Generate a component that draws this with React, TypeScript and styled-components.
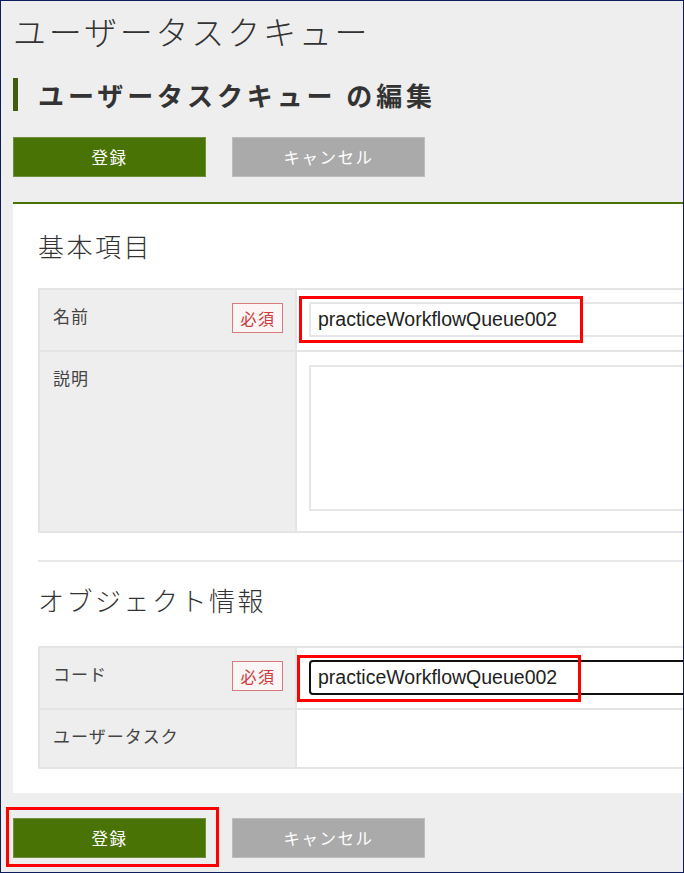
import React from "react";
import styled, { createGlobalStyle } from "styled-components";

const GlobalStyle = createGlobalStyle`
  html, body { margin: 0; padding: 0; }
  body {
    font-family: "Noto Sans CJK JP", "Noto Sans", sans-serif;
    background: #eeeeee;
    color: #333;
  }
  * { box-sizing: border-box; }
`;

const Frame = styled.div`
  position: relative;
  width: 684px;
  height: 873px;
  border: 1px solid #0c1c5c;
  background: #eeeeee;
  overflow: hidden;
  padding-left: 12px;
`;

const Title = styled.h1`
  margin: 0;
  padding-top: 12px;
  font-size: 33px;
  line-height: 36px;
  font-weight: 300;
  letter-spacing: 2.8px;
  color: #333;
  white-space: nowrap;
`;

const SubHeading = styled.h2`
  display: flex;
  align-items: center;
  margin: 29px 0 0;
  height: 33px;
  border-left: 5px solid #3e5e0c;
  padding-left: 20px;
  font-size: 26px;
  font-weight: 700;
  letter-spacing: 3.9px;
  color: #333;
  white-space: nowrap;
`;

const ButtonRow = styled.div<{ $top: number }>`
  display: flex;
  gap: 26px;
  margin-top: ${(p) => p.$top}px;
`;

const Button = styled.button<{ $variant: "primary" | "secondary" }>`
  width: 193px;
  height: 40px;
  border: 1px solid ${(p) => (p.$variant === "primary" ? "#6f8f3f" : "#bdbdbd")};
  background: ${(p) => (p.$variant === "primary" ? "#4a7306" : "#aaaaaa")};
  color: #ffffff;
  font-family: "Noto Sans CJK JP", sans-serif;
  font-size: 16.5px;
  letter-spacing: 1.5px;
  padding: 0;
  cursor: pointer;
`;

const Anchor = styled.div`
  position: relative;
`;

const Highlight = styled.div<{ $l: number; $t: number; $w: number; $h: number }>`
  position: absolute;
  left: ${(p) => p.$l}px;
  top: ${(p) => p.$t}px;
  width: ${(p) => p.$w}px;
  height: ${(p) => p.$h}px;
  border: 3px solid #ff0000;
  pointer-events: none;
`;

const Panel = styled.section`
  margin-top: 25px;
  border-top: 2px solid #4a7306;
  background: #ffffff;
  padding: 0 0 24px 25px;
`;

const SectionHeading = styled.h3`
  margin: 0;
  font-size: 26px;
  line-height: 32px;
  font-weight: 300;
  letter-spacing: 2.5px;
  color: #333;
  white-space: nowrap;
`;

const Section = styled.div<{ $headTop: number; $tableTop: number }>`
  ${SectionHeading} {
    margin-top: ${(p) => p.$headTop}px;
    margin-bottom: ${(p) => p.$tableTop}px;
  }
`;

const Divider = styled.hr`
  margin: 27px 0 0;
  border: none;
  border-top: 2px solid #e8e8e8;
  width: calc(100% + 20px);
`;

const Table = styled.div`
  width: calc(100% + 20px);
  border: 2px solid #e4e4e4;
  border-right: none;
`;

const Row = styled.div<{ $h: number }>`
  display: grid;
  grid-template-columns: 257px 1fr;
  height: ${(p) => p.$h}px;
  & + & {
    border-top: 2px solid #e4e4e4;
  }
`;

const LabelCell = styled.div`
  display: flex;
  justify-content: space-between;
  align-items: flex-start;
  background: #eeeeee;
  border-right: 2px solid #e4e4e4;
  padding: 15px 12px 0 13px;
`;

const LabelText = styled.span`
  font-size: 17px;
  line-height: 22px;
  letter-spacing: 1px;
  color: #444;
  white-space: nowrap;
`;

const Required = styled.span`
  display: inline-flex;
  align-items: center;
  justify-content: center;
  width: 51px;
  height: 30px;
  margin-top: -2px;
  border: 1px solid #d57b7b;
  background: #fbf5f5;
  color: #cc3b3b;
  font-size: 16px;
  letter-spacing: 1.5px;
  padding-left: 1px;
`;

const ValueCell = styled.div`
  position: relative;
  padding: 12px 0 0 12px;
  overflow: visible;
`;

const TextInput = styled.input<{ $focused?: boolean }>`
  display: block;
  width: 100%;
  height: 35px;
  border: ${(p) => (p.$focused ? "2px solid #111" : "2px solid #e6e6e6")};
  border-radius: ${(p) => (p.$focused ? "4px" : "0")};
  padding: 0 0 0 7px;
  font-family: "Liberation Sans", Arial, sans-serif;
  font-size: 19.5px;
  color: #222;
  background: #fff;
  outline: none;
`;

const TextArea = styled.textarea`
  display: block;
  width: 100%;
  height: 146px;
  margin-top: 1px;
  border: 2px solid #e6e6e6;
  resize: none;
  background: #fff;
  outline: none;
`;

export default function App() {
  return (
    <>
      <GlobalStyle />
      <Frame>
        <Title>ユーザータスクキュー</Title>
        <SubHeading>ユーザータスクキュー の編集</SubHeading>
        <ButtonRow $top={26}>
          <Button $variant="primary">登録</Button>
          <Button $variant="secondary">キャンセル</Button>
        </ButtonRow>

        <Panel>
          <Section $headTop={26} $tableTop={26}>
            <SectionHeading>基本項目</SectionHeading>
            <Table>
              <Row $h={60}>
                <LabelCell>
                  <LabelText>名前</LabelText>
                  <Required>必須</Required>
                </LabelCell>
                <ValueCell>
                  <TextInput readOnly value="practiceWorkflowQueue002" />
                  <Highlight $l={2} $t={6} $w={284} $h={47} />
                </ValueCell>
              </Row>
              <Row $h={181}>
                <LabelCell>
                  <LabelText>説明</LabelText>
                </LabelCell>
                <ValueCell>
                  <TextArea readOnly />
                </ValueCell>
              </Row>
            </Table>
          </Section>

          <Divider />

          <Section $headTop={22} $tableTop={30}>
            <SectionHeading>オブジェクト情報</SectionHeading>
            <Table>
              <Row $h={60}>
                <LabelCell>
                  <LabelText>コード</LabelText>
                  <Required>必須</Required>
                </LabelCell>
                <ValueCell>
                  <TextInput $focused readOnly value="practiceWorkflowQueue002" />
                  <Highlight $l={0} $t={7} $w={284} $h={47} />
                </ValueCell>
              </Row>
              <Row $h={59}>
                <LabelCell>
                  <LabelText>ユーザータスク</LabelText>
                </LabelCell>
                <ValueCell />
              </Row>
            </Table>
          </Section>
        </Panel>

        <ButtonRow $top={25}>
          <Anchor>
            <Button $variant="primary">登録</Button>
            <Highlight $l={-7} $t={-11} $w={213} $h={60} />
          </Anchor>
          <Button $variant="secondary">キャンセル</Button>
        </ButtonRow>
      </Frame>
    </>
  );
}
